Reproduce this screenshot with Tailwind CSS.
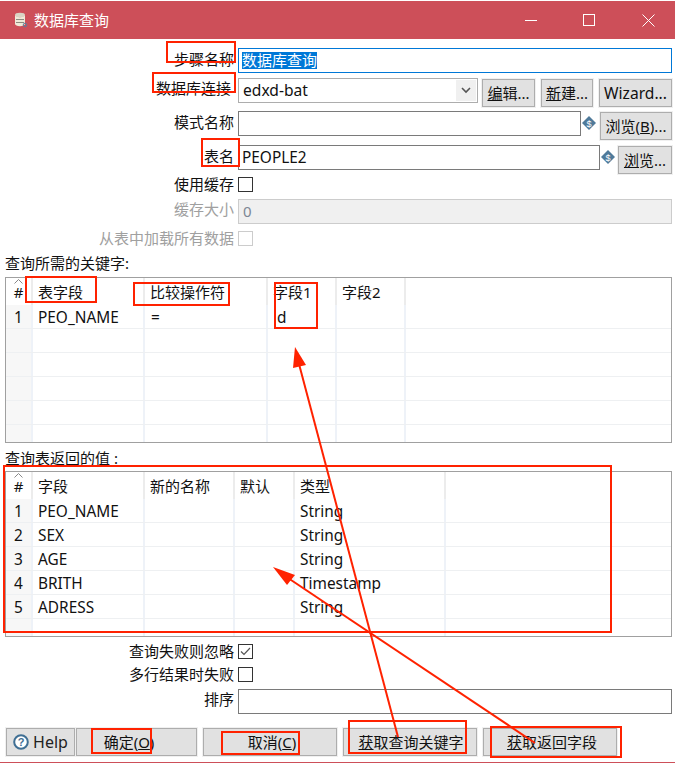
<!DOCTYPE html>
<html lang="zh-CN">
<head>
    <meta charset="UTF-8">
    <title>数据库查询</title>
    <script src="https://cdn.jsdelivr.net/npm/@tailwindcss/browser@4"></script>
</head>
<body class="bg-white">
<div class="relative w-[675px] h-[767px] overflow-hidden bg-white text-[15px] leading-[19px] text-[#111] font-['Noto_Sans','Noto_Sans_CJK_SC',sans-serif]">

    <!-- Title bar -->
    <div class="mt-px h-[38px] bg-[#cd4f59] flex items-center text-white">
        <svg class="ml-[14px] w-[14px] h-[16px]" viewBox="0 0 14 16">
            <ellipse cx="6" cy="3" rx="5" ry="2.2" fill="#d9d4c4"/>
            <path d="M1 3v9c0 1.2 2.2 2.2 5 2.2s5-1 5-2.2V3c0 1.2-2.2 2.2-5 2.2S1 4.200 1 3z" fill="#efe9d8"/>
            <path d="M2 7.500h8M2 10.500h8" stroke="#8d8a80" stroke-width="1"/>
            <circle cx="11" cy="13" r="1.800" fill="none" stroke="#5b7f9c" stroke-width="1"/>
        </svg>
        <span class="ml-[6px] text-[15px]">数据库查询</span>
        <svg class="ml-[416px] w-[13px] h-[13px]" viewBox="0 0 13 13"><path d="M0 6.500h12" stroke="#fff" stroke-width="1"/></svg>
        <svg class="ml-[45px] w-[13px] h-[13px]" viewBox="0 0 13 13"><rect x="0.500" y="0.500" width="11" height="11" fill="none" stroke="#fff" stroke-width="1"/></svg>
        <svg class="ml-[46px] w-[13px] h-[13px]" viewBox="0 0 13 13"><path d="M0.500 0.500l12 12M12.500 0.500l-12 12" stroke="#fff" stroke-width="1"/></svg>
    </div>

    <!-- Form -->
    <div class="mt-[9px] h-[25px] flex">
        <div class="w-[234px] text-right pt-[2px]">步骤名称</div>
        <div class="ml-[4px] w-[434px] h-[25px] border border-[#0078d7] flex items-center pl-[3px]"><span class="bg-[#0078d7] text-white leading-[17px]">数据库查询</span></div>
    </div>
    <div class="mt-[5px] h-[29px] flex items-start">
        <div class="w-[234px] text-right pt-[1px] pr-[3px]">数据库连接</div>
        <div class="ml-[4px] w-[240px] h-[25px] border border-[#adadad] flex items-center justify-between pl-[4px] pr-px">
            <span class="text-[15.6px]">edxd-bat</span>
            <div class="w-[20px] h-[21px] bg-[#f0f0f0] flex items-center justify-center">
                <svg class="w-[10px] h-[7px]" viewBox="0 0 10 7"><path d="M1 1l4 4 4-4" fill="none" stroke="#555" stroke-width="1.600"/></svg>
            </div>
        </div>
        <button class="ml-[4px] mt-px w-[53px] h-[28px] bg-[#e1e1e1] border border-[#adadad] ring-1 ring-[#f0f0f0]"><u>编</u>辑...</button>
        <button class="ml-[6px] mt-px w-[52px] h-[28px] bg-[#e1e1e1] border border-[#adadad] ring-1 ring-[#f0f0f0]"><u>新</u>建...</button>
        <button class="ml-[6px] mt-px w-[73px] h-[28px] bg-[#e1e1e1] border border-[#adadad] ring-1 ring-[#f0f0f0] text-[15.6px]">Wizard...</button>
    </div>
    <div class="mt-[4px] h-[29px] flex items-start">
        <div class="w-[234px] text-right pt-[2px]">模式名称</div>
        <div class="ml-[4px] w-[343px] h-[25px] border border-[#7a7a7a]"></div>
        <svg class="ml-px mt-[5px] w-[14px] h-[14px]" viewBox="0 0 14 14"><path d="M7 0l7 7-7 7-7-7z" fill="#4f7a9a"/><text x="7" y="10.500" font-size="9" font-family="Liberation Sans" text-anchor="middle" fill="#fff">$</text></svg>
        <button class="ml-[4px] mt-px w-[72px] h-[28px] bg-[#e1e1e1] border border-[#adadad] ring-1 ring-[#f0f0f0]">浏览(<u>B</u>)...</button>
    </div>
    <div class="mt-[5px] h-[29px] flex items-start">
        <div class="w-[234px] text-right pt-[2px]">表名</div>
        <div class="ml-[4px] w-[362px] h-[25px] border border-[#7a7a7a] flex items-center pl-[3px] text-[15.4px]">PEOPLE2</div>
        <svg class="ml-px mt-[5px] w-[14px] h-[14px]" viewBox="0 0 14 14"><path d="M7 0l7 7-7 7-7-7z" fill="#4f7a9a"/><text x="7" y="10.500" font-size="9" font-family="Liberation Sans" text-anchor="middle" fill="#fff">$</text></svg>
        <button class="ml-[3px] mt-px w-[54px] h-[28px] bg-[#e1e1e1] border border-[#adadad] ring-1 ring-[#f0f0f0]"><u>浏</u>览...</button>
    </div>
    <div class="mt-[3px] h-[15px] flex items-center">
        <div class="w-[234px] text-right">使用缓存</div>
        <div class="ml-[4px] w-[15px] h-[15px] border border-[#333]"></div>
    </div>
    <div class="mt-[7px] h-[25px] flex">
        <div class="w-[234px] text-right text-[#a0a0a0] pt-[1px]">缓存大小</div>
        <div class="ml-[4px] w-[434px] h-[25px] border border-[#cccccc] bg-[#f0f0f0] flex items-center pl-[4px] text-[#7d8794]">0</div>
    </div>
    <div class="mt-[7px] h-[15px] flex items-center">
        <div class="w-[234px] text-right text-[#a0a0a0]">从表中加载所有数据</div>
        <div class="ml-[4px] w-[15px] h-[15px] border border-[#cccccc]"></div>
    </div>

    <!-- Key table -->
    <div class="mt-[8px] ml-[5px] h-[19px]">查询所需的关键字:</div>
    <div class="mt-[4px] ml-[5px] w-[667px] h-[166px] border border-[#a0a0a0] overflow-hidden">
        <div class="h-[27px] grid grid-cols-[27px_112px_123px_69px_69px_1fr]">
            <div class="relative border-r-2 border-[#ececec] pt-[5px] text-center">
                <svg class="absolute left-[8px] top-px w-[9px] h-[5px]" viewBox="0 0 9 5"><path d="M0.500 4.500l4-4 4 4" fill="none" stroke="#888" stroke-width="1"/></svg>#
            </div>
            <div class="border-r-2 border-[#ececec] pl-[5px] pt-[5px]">表字段</div>
            <div class="border-r-2 border-[#ececec] pl-[5px] pt-[5px]">比较操作符</div>
            <div class="border-r-2 border-[#ececec] pl-[5px] pt-[5px]">字段1</div>
            <div class="border-r-2 border-[#ececec] pl-[5px] pt-[5px]">字段2</div>
            <div></div>
        </div>
        <div class="h-[24px] grid grid-cols-[27px_112px_123px_69px_69px_1fr] border-b border-[#eef0f2] text-[15.4px]">
            <div class="bg-[#f7f7f7] border-r-2 border-[#eef2f8] text-center pt-[3px]">1</div>
            <div class="border-r-2 border-[#eef2f8] pl-[5px] pt-[3px]">PEO_NAME</div>
            <div class="border-r-2 border-[#eef2f8] pl-[6px] pt-[3px]">=</div>
            <div class="border-r-2 border-[#eef2f8] pl-[9px] pt-[3px]">d</div>
            <div class="border-r-2 border-[#eef2f8]"></div>
            <div></div>
        </div>
        <div class="h-[24px] grid grid-cols-[27px_112px_123px_69px_69px_1fr] border-b border-[#eef0f2]">
            <div class="bg-[#f7f7f7] border-r-2 border-[#eef2f8]"></div>
            <div class="border-r-2 border-[#eef2f8]"></div>
            <div class="border-r-2 border-[#eef2f8]"></div>
            <div class="border-r-2 border-[#eef2f8]"></div>
            <div class="border-r-2 border-[#eef2f8]"></div>
            <div></div>
        </div>
        <div class="h-[24px] grid grid-cols-[27px_112px_123px_69px_69px_1fr] border-b border-[#eef0f2]">
            <div class="bg-[#f7f7f7] border-r-2 border-[#eef2f8]"></div>
            <div class="border-r-2 border-[#eef2f8]"></div>
            <div class="border-r-2 border-[#eef2f8]"></div>
            <div class="border-r-2 border-[#eef2f8]"></div>
            <div class="border-r-2 border-[#eef2f8]"></div>
            <div></div>
        </div>
        <div class="h-[24px] grid grid-cols-[27px_112px_123px_69px_69px_1fr] border-b border-[#eef0f2]">
            <div class="bg-[#f7f7f7] border-r-2 border-[#eef2f8]"></div>
            <div class="border-r-2 border-[#eef2f8]"></div>
            <div class="border-r-2 border-[#eef2f8]"></div>
            <div class="border-r-2 border-[#eef2f8]"></div>
            <div class="border-r-2 border-[#eef2f8]"></div>
            <div></div>
        </div>
        <div class="h-[24px] grid grid-cols-[27px_112px_123px_69px_69px_1fr] border-b border-[#eef0f2]">
            <div class="bg-[#f7f7f7] border-r-2 border-[#eef2f8]"></div>
            <div class="border-r-2 border-[#eef2f8]"></div>
            <div class="border-r-2 border-[#eef2f8]"></div>
            <div class="border-r-2 border-[#eef2f8]"></div>
            <div class="border-r-2 border-[#eef2f8]"></div>
            <div></div>
        </div>
        <div class="h-[17px] grid grid-cols-[27px_112px_123px_69px_69px_1fr]">
            <div class="bg-[#f7f7f7] border-r-2 border-[#eef2f8]"></div>
            <div class="border-r-2 border-[#eef2f8]"></div>
            <div class="border-r-2 border-[#eef2f8]"></div>
            <div class="border-r-2 border-[#eef2f8]"></div>
            <div class="border-r-2 border-[#eef2f8]"></div>
            <div></div>
        </div>
    </div>

    <!-- Return values table -->
    <div class="mt-[6px] ml-[5px] h-[19px]">查询表返回的值 :</div>
    <div class="mt-[3px] ml-[5px] w-[667px] h-[166px] border border-[#a0a0a0] overflow-hidden">
        <div class="h-[27px] grid grid-cols-[27px_112px_90px_60px_151px_1fr]">
            <div class="relative border-r-2 border-[#ececec] pt-[5px] text-center">
                <svg class="absolute left-[8px] top-px w-[9px] h-[5px]" viewBox="0 0 9 5"><path d="M0.500 4.500l4-4 4 4" fill="none" stroke="#888" stroke-width="1"/></svg>#
            </div>
            <div class="border-r-2 border-[#ececec] pl-[5px] pt-[5px]">字段</div>
            <div class="border-r-2 border-[#ececec] pl-[5px] pt-[5px]">新的名称</div>
            <div class="border-r-2 border-[#ececec] pl-[5px] pt-[5px]">默认</div>
            <div class="border-r-2 border-[#ececec] pl-[5px] pt-[5px]">类型</div>
            <div></div>
        </div>
        <div class="h-[24px] grid grid-cols-[27px_112px_90px_60px_151px_1fr] border-b border-[#eef0f2] text-[15.4px]">
            <div class="bg-[#f7f7f7] border-r-2 border-[#eef2f8] text-center pt-[3px]">1</div>
            <div class="border-r-2 border-[#eef2f8] pl-[5px] pt-[3px]">PEO_NAME</div>
            <div class="border-r-2 border-[#eef2f8]"></div>
            <div class="border-r-2 border-[#eef2f8]"></div>
            <div class="border-r-2 border-[#eef2f8] pl-[5px] pt-[3px]">String</div>
            <div></div>
        </div>
        <div class="h-[24px] grid grid-cols-[27px_112px_90px_60px_151px_1fr] border-b border-[#eef0f2] text-[15.4px]">
            <div class="bg-[#f7f7f7] border-r-2 border-[#eef2f8] text-center pt-[3px]">2</div>
            <div class="border-r-2 border-[#eef2f8] pl-[5px] pt-[3px]">SEX</div>
            <div class="border-r-2 border-[#eef2f8]"></div>
            <div class="border-r-2 border-[#eef2f8]"></div>
            <div class="border-r-2 border-[#eef2f8] pl-[5px] pt-[3px]">String</div>
            <div></div>
        </div>
        <div class="h-[24px] grid grid-cols-[27px_112px_90px_60px_151px_1fr] border-b border-[#eef0f2] text-[15.4px]">
            <div class="bg-[#f7f7f7] border-r-2 border-[#eef2f8] text-center pt-[3px]">3</div>
            <div class="border-r-2 border-[#eef2f8] pl-[5px] pt-[3px]">AGE</div>
            <div class="border-r-2 border-[#eef2f8]"></div>
            <div class="border-r-2 border-[#eef2f8]"></div>
            <div class="border-r-2 border-[#eef2f8] pl-[5px] pt-[3px]">String</div>
            <div></div>
        </div>
        <div class="h-[24px] grid grid-cols-[27px_112px_90px_60px_151px_1fr] border-b border-[#eef0f2] text-[15.4px]">
            <div class="bg-[#f7f7f7] border-r-2 border-[#eef2f8] text-center pt-[3px]">4</div>
            <div class="border-r-2 border-[#eef2f8] pl-[5px] pt-[3px]">BRITH</div>
            <div class="border-r-2 border-[#eef2f8]"></div>
            <div class="border-r-2 border-[#eef2f8]"></div>
            <div class="border-r-2 border-[#eef2f8] pl-[5px] pt-[3px]">Timestamp</div>
            <div></div>
        </div>
        <div class="h-[24px] grid grid-cols-[27px_112px_90px_60px_151px_1fr] border-b border-[#eef0f2] text-[15.4px]">
            <div class="bg-[#f7f7f7] border-r-2 border-[#eef2f8] text-center pt-[3px]">5</div>
            <div class="border-r-2 border-[#eef2f8] pl-[5px] pt-[3px]">ADRESS</div>
            <div class="border-r-2 border-[#eef2f8]"></div>
            <div class="border-r-2 border-[#eef2f8]"></div>
            <div class="border-r-2 border-[#eef2f8] pl-[5px] pt-[3px]">String</div>
            <div></div>
        </div>
        <div class="h-[17px] grid grid-cols-[27px_112px_90px_60px_151px_1fr]">
            <div class="bg-[#f7f7f7] border-r-2 border-[#eef2f8]"></div>
            <div class="border-r-2 border-[#eef2f8]"></div>
            <div class="border-r-2 border-[#eef2f8]"></div>
            <div class="border-r-2 border-[#eef2f8]"></div>
            <div class="border-r-2 border-[#eef2f8]"></div>
            <div></div>
        </div>
    </div>

    <!-- Options -->
    <div class="mt-[6px] h-[16px] flex items-center">
        <div class="w-[234px] text-right">查询失败则忽略</div>
        <div class="ml-[4px] w-[15px] h-[15px] border border-[#333] flex items-center justify-center">
            <svg class="w-[11px] h-[9px]" viewBox="0 0 11 9"><path d="M1 4.500l3 3 6-6.500" fill="none" stroke="#555" stroke-width="1.200"/></svg>
        </div>
    </div>
    <div class="mt-[7px] h-[16px] flex items-center">
        <div class="w-[234px] text-right">多行结果时失败</div>
        <div class="ml-[4px] w-[15px] h-[15px] border border-[#333]"></div>
    </div>
    <div class="mt-[7px] h-[25px] flex">
        <div class="w-[234px] text-right pt-[1px]">排序</div>
        <div class="ml-[4px] w-[434px] h-[25px] border border-[#7a7a7a]"></div>
    </div>

    <!-- Bottom buttons -->
    <div class="mt-[14px] ml-[6px] h-[29px] flex">
        <button class="w-[69px] h-[28px] bg-[#e1e1e1] border border-[#adadad] ring-1 ring-[#f0f0f0] flex items-center justify-center gap-[4px] text-[#222] text-[16px]">
            <svg class="w-[16px] h-[16px]" viewBox="0 0 16 16"><circle cx="8" cy="8" r="6.800" fill="#fff" stroke="#3f6f94" stroke-width="2"/><text x="8" y="12" font-size="11" font-weight="700" font-family="Liberation Sans" text-anchor="middle" fill="#3f6f94">?</text></svg>
            Help
        </button>
        <button class="ml-px w-[121px] h-[28px] bg-[#e1e1e1] border border-[#adadad] ring-1 ring-[#f0f0f0] pr-[15px]">确定(<u>O</u>)</button>
        <button class="ml-[6px] w-[134px] h-[28px] bg-[#e1e1e1] border border-[#adadad] ring-1 ring-[#f0f0f0] pl-[4px]">取消(<u>C</u>)</button>
        <button class="ml-[6px] w-[134px] h-[28px] bg-[#e1e1e1] border border-[#adadad] ring-1 ring-[#f0f0f0] pl-[2px]"><u>获</u>取查询关键字</button>
        <button class="ml-[6px] w-[134px] h-[28px] bg-[#e1e1e1] border border-[#adadad] ring-1 ring-[#f0f0f0] pl-[4px]"><u>获</u>取返回字段</button>
    </div>
    <div class="mt-[5px] h-px bg-[#cd4f59]"></div>

    <!-- Red annotations drawn over the screenshot -->
    <svg class="absolute left-0 top-0 w-[675px] h-[767px] pointer-events-none" viewBox="0 0 675 767" fill="none" stroke="#ff2200" stroke-width="2">
        <rect x="167" y="42" width="68" height="20"/>
        <rect x="153" y="73" width="82" height="19"/>
        <rect x="202" y="139" width="37" height="27"/>
        <rect x="26" y="277" width="70" height="25"/>
        <rect x="134" y="283" width="95" height="22"/>
        <rect x="275" y="283" width="42" height="45"/>
        <rect x="4" y="466" width="607" height="166"/>
        <rect x="92" y="729" width="59" height="24"/>
        <rect x="222" y="732" width="77" height="22"/>
        <rect x="349" y="721" width="117" height="32"/>
        <rect x="491" y="727" width="130" height="30"/>
        <path d="M398 737L299 364"/>
        <path d="M295 347L293 368L306 365Z" fill="#ff2200" stroke="none"/>
        <path d="M535 743L288 578"/>
        <path d="M273 567L287 585L295 575Z" fill="#ff2200" stroke="none"/>
    </svg>
</div>
</body>
</html>
